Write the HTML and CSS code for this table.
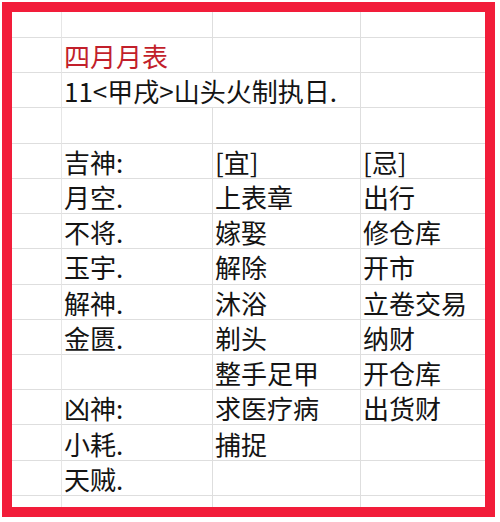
FILE: index.html
```html
<!DOCTYPE html>
<html lang="zh-CN">
<head>
<meta charset="utf-8">
<title>四月月表</title>
<link rel="stylesheet" href="styles.css">
</head>
<body>
<div class="sheet">
  <div class="grid">
    <div class="c edge top"></div><div class="c top"></div><div class="c top"></div><div class="c top last"></div>

    <div class="c edge"></div><div class="c red">四月月表</div><div class="c"></div><div class="c last"></div>
    <div class="c edge"></div><div class="c span">11&lt;甲戌&gt;山头火制执日.</div><div class="c last"></div>
    <div class="c edge"></div><div class="c"></div><div class="c"></div><div class="c last"></div>
    <div class="c edge"></div><div class="c">吉神:</div><div class="c">[宜]</div><div class="c last">[忌]</div>
    <div class="c edge"></div><div class="c">月空.</div><div class="c">上表章</div><div class="c last">出行</div>
    <div class="c edge"></div><div class="c">不将.</div><div class="c">嫁娶</div><div class="c last">修仓库</div>
    <div class="c edge"></div><div class="c">玉宇.</div><div class="c">解除</div><div class="c last">开市</div>
    <div class="c edge"></div><div class="c">解神.</div><div class="c">沐浴</div><div class="c last">立卷交易</div>
    <div class="c edge"></div><div class="c">金匮.</div><div class="c">剃头</div><div class="c last">纳财</div>
    <div class="c edge"></div><div class="c"></div><div class="c">整手足甲</div><div class="c last">开仓库</div>
    <div class="c edge"></div><div class="c">凶神:</div><div class="c">求医疗病</div><div class="c last">出货财</div>
    <div class="c edge"></div><div class="c">小耗.</div><div class="c">捕捉</div><div class="c last"></div>
    <div class="c edge"></div><div class="c">天贼.</div><div class="c"></div><div class="c last"></div>

    <div class="c edge bottom"></div><div class="c bottom"></div><div class="c bottom"></div><div class="c bottom last"></div>
  </div>
</div>
</body>
</html>
```
FILE: styles.css
```css
html, body {
  margin: 0;
  padding: 0;
  background: #ffffff;
}
body {
  width: 500px;
  height: 522px;
  overflow: hidden;
  font-family: "Noto Sans CJK SC", "Noto Sans", sans-serif;
}
.sheet {
  margin: 2px 0 0 2px;
  width: 493px;
  height: 515px;
  box-sizing: border-box;
  border: 10px solid #f21d3a;
  background: #ffffff;
}
.grid {
  display: grid;
  grid-template-columns: 50px 151px 148px 124px;
  grid-template-rows: 26px repeat(13, 35.23px) 11px;
  height: 100%;
}
.c {
  box-sizing: border-box;
  border-right: 1px solid #dedede;
  border-bottom: 1px solid #dedede;
  font-size: 26px;
  color: #141414;
  padding-left: 2px;
  display: flex;
  align-items: center;
  padding-top: 2px;
  white-space: nowrap;
  line-height: 1;
}
.c.last {
  border-right: none;
}
.c.edge {
  border-right: 1px solid #e6e6e6;
}
.c.bottom {
  border-bottom: none;
}
.c.red {
  color: #c21f2b;
}
.c.span {
  grid-column: span 2;
  overflow: visible;
}
```
